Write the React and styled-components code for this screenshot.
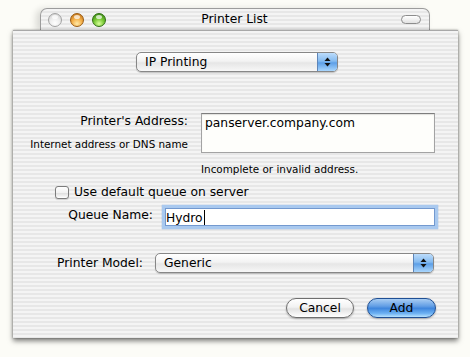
import React from 'react';
import styled, { createGlobalStyle } from 'styled-components';

const Global = createGlobalStyle`
  html, body { margin: 0; padding: 0; background: #fcfcf7; }
  body { font-family: "DejaVu Sans", "Noto Sans", sans-serif; color: #000; overflow: hidden; }
`;

const stripes = `repeating-linear-gradient(to bottom, #f4f4f4 0px, #f4f4f4 2px, #e7e7e7 2px, #e7e7e7 4px)`;

const Page = styled.div`
  width: 470px;
  height: 357px;
  box-sizing: border-box;
  padding-top: 8px;
  display: flex;
  flex-direction: column;
`;

const TitleBar = styled.div`
  margin-left: 40px;
  width: 390px;
  height: 22px;
  box-sizing: border-box;
  border: 1px solid #9c9c9c;
  border-bottom: none;
  border-radius: 7px 7px 0 0;
  background: ${stripes};
  box-shadow: -4px 1px 7px rgba(0, 0, 0, 0.14);
  display: grid;
  grid-template-columns: 1fr auto 1fr;
  align-items: center;
  padding: 0 8px 0 7px;
`;

const Lights = styled.div`
  display: flex;
  gap: 8px;
  align-items: center;
`;

const lightStyles = {
  gray: `background: radial-gradient(circle at 50% 75%, #ffffff 0%, #eeeeee 45%, #c9c9c9 100%); border-color: #a2a2a2;`,
  orange: `background: radial-gradient(circle at 50% 80%, #ffe9a6 0%, #f4b04a 45%, #c4761a 90%); border-color: #9a5b12;`,
  green: `background: radial-gradient(circle at 50% 80%, #d8ff9a 0%, #78c835 45%, #3b8a14 90%); border-color: #2f6e12;`,
};

const Light = styled.span`
  width: 14px;
  height: 14px;
  box-sizing: border-box;
  border-radius: 50%;
  border: 1px solid;
  position: relative;
  ${(p) => lightStyles[p.$kind]}
  &::after {
    content: '';
    position: absolute;
    left: 3px;
    top: 1px;
    width: 6px;
    height: 4px;
    border-radius: 50%;
    background: rgba(255, 255, 255, 0.7);
  }
`;

const Title = styled.div`
  font-size: 12.3px;
  line-height: 15px;
`;

const Pill = styled.span`
  justify-self: end;
  width: 20px;
  height: 9px;
  box-sizing: border-box;
  border: 1px solid #8c8c8c;
  border-radius: 5px;
  background: linear-gradient(#ffffff, #e2e2e2);
`;

const Sheet = styled.div`
  margin-left: 13px;
  width: 445px;
  height: 308px;
  box-sizing: border-box;
  background: ${stripes};
  border-top: 1px solid #a8a8a8;
  box-shadow: 0 3px 5px rgba(0, 0, 0, 0.5), 0 0 2px rgba(0, 0, 0, 0.35);
  display: flex;
  flex-direction: column;
  padding-top: 21px;
`;

const Centered = styled.div`
  display: flex;
  padding-left: 123px;
`;

const Popup = styled.div`
  width: ${(p) => p.$w}px;
  height: 20px;
  box-sizing: border-box;
  border: 1px solid #878787;
  border-radius: 5px;
  background: linear-gradient(#ffffff 0%, #f3f3f3 45%, #e6e6e6 55%, #f7f7f7 100%);
  box-shadow: 0 1px 1px rgba(0, 0, 0, 0.2);
  display: flex;
  overflow: hidden;
`;

const PopupLabel = styled.span`
  flex: 1;
  padding-left: 8px;
  font-size: 12.3px;
  line-height: 18px;
`;

const PopupArrows = styled.span`
  width: 19px;
  border-left: 1px solid #5e85b8;
  background: linear-gradient(#bcdcfb 0%, #85bbf0 45%, #5d9fe7 55%, #a9d6fd 100%);
  display: flex;
  align-items: center;
  justify-content: center;
`;

const Arrows = () => (
  <svg width="7" height="10" viewBox="0 0 7 10">
    <path d="M3.5 0.5 L6.5 4 L0.5 4 Z" fill="#111" />
    <path d="M3.5 9.5 L6.5 6 L0.5 6 Z" fill="#111" />
  </svg>
);

const FieldRow = styled.div`
  display: flex;
  align-items: ${(p) => p.$align || 'flex-start'};
  margin-top: ${(p) => p.$mt}px;
  gap: ${(p) => p.$gap}px;
`;

const LabelCol = styled.div`
  width: ${(p) => p.$w}px;
  display: flex;
  flex-direction: column;
  align-items: flex-end;
  padding-top: ${(p) => p.$pt || 0}px;
`;

const Label = styled.span`
  font-size: 12.3px;
  line-height: 15px;
  white-space: nowrap;
`;

const SmallLabel = styled.span`
  font-size: 10.4px;
  line-height: 13px;
  white-space: nowrap;
  margin-top: ${(p) => p.$mt || 0}px;
`;

const AddressBox = styled.div`
  width: 234px;
  height: 40px;
  box-sizing: border-box;
  border: 1px solid #a3a3a3;
  border-top-color: #7d7d7d;
  background: #fefefb;
  box-shadow: inset 0 1px 1px rgba(0, 0, 0, 0.12);
  padding: 2px 3px;
  font-size: 12.3px;
  line-height: 15px;
`;

const Hint = styled.div`
  margin-left: 188px;
  margin-top: 10px;
  font-size: 10.4px;
  line-height: 13px;
`;

const CheckRow = styled.label`
  display: flex;
  align-items: center;
  gap: 5px;
  margin-top: 9px;
  padding-left: 42px;
  font-size: 12.3px;
  line-height: 15px;
`;

const Check = styled.span`
  width: 14px;
  height: 13px;
  box-sizing: border-box;
  border: 1px solid #7c7c7c;
  border-radius: 3px;
  background: linear-gradient(#ffffff 0%, #f2f2f2 50%, #dedede 55%, #ffffff 100%);
  box-shadow: 0 1px 1px rgba(0, 0, 0, 0.15);
`;

const FocusField = styled.div`
  width: 276px;
  height: 24px;
  box-sizing: border-box;
  border: 3px solid #a9c9ef;
  box-shadow: inset 0 0 0 1px #7399cf, 0 0 1px #6f98d4;
  background: #ffffff;
  padding: 1px 1px 0 1px;
  font-size: 12.3px;
  line-height: 16px;
  display: flex;
  align-items: center;
`;

const Caret = styled.span`
  width: 1px;
  height: 15px;
  background: #000;
  margin-left: 1px;
`;

const Buttons = styled.div`
  display: flex;
  justify-content: flex-end;
  gap: 13px;
  margin-top: 25px;
  padding-right: 22px;
`;

const Button = styled.button`
  width: ${(p) => p.$w}px;
  height: 20px;
  box-sizing: border-box;
  border-radius: 10px;
  font-family: "DejaVu Sans", sans-serif;
  font-size: 12.3px;
  line-height: 16px;
  padding: 0;
  color: #000;
  box-shadow: 0 1px 2px rgba(0, 0, 0, 0.3);
  border: 1px solid ${(p) => (p.$primary ? '#1f4f94' : '#6f6f6f')};
  background: ${(p) =>
    p.$primary
      ? 'linear-gradient(#a9cdf3 0%, #629ee5 40%, #3f86dd 52%, #6db1f2 80%, #b8e3ff 100%)'
      : 'linear-gradient(#ffffff 0%, #f2f2f2 45%, #e2e2e2 55%, #f6f6f6 85%, #ffffff 100%)'};
`;

export default function App() {
  return (
    <>
      <Global />
      <Page>
        <TitleBar>
          <Lights>
            <Light $kind="gray" />
            <Light $kind="orange" />
            <Light $kind="green" />
          </Lights>
          <Title>Printer List</Title>
          <Pill />
        </TitleBar>
        <Sheet>
          <Centered>
            <Popup $w={202}>
              <PopupLabel>IP Printing</PopupLabel>
              <PopupArrows>
                <Arrows />
              </PopupArrows>
            </Popup>
          </Centered>

          <FieldRow $mt={41} $gap={13}>
            <LabelCol $w={175} $pt={1}>
              <Label>Printer's Address:</Label>
              <SmallLabel $mt={9}>Internet address or DNS name</SmallLabel>
            </LabelCol>
            <AddressBox>panserver.company.com</AddressBox>
          </FieldRow>

          <Hint>Incomplete or invalid address.</Hint>

          <CheckRow>
            <Check />
            Use default queue on server
          </CheckRow>

          <FieldRow $mt={5} $gap={9}>
            <LabelCol $w={140} $pt={3}>
              <Label>Queue Name:</Label>
            </LabelCol>
            <FocusField>
              Hydro
              <Caret />
            </FocusField>
          </FieldRow>

          <FieldRow $mt={24} $gap={12} $align="center">
            <LabelCol $w={130}>
              <Label>Printer Model:</Label>
            </LabelCol>
            <Popup $w={279}>
              <PopupLabel>Generic</PopupLabel>
              <PopupArrows>
                <Arrows />
              </PopupArrows>
            </Popup>
          </FieldRow>

          <Buttons>
            <Button $w={68}>Cancel</Button>
            <Button $w={69} $primary>Add</Button>
          </Buttons>
        </Sheet>
      </Page>
    </>
  );
}
